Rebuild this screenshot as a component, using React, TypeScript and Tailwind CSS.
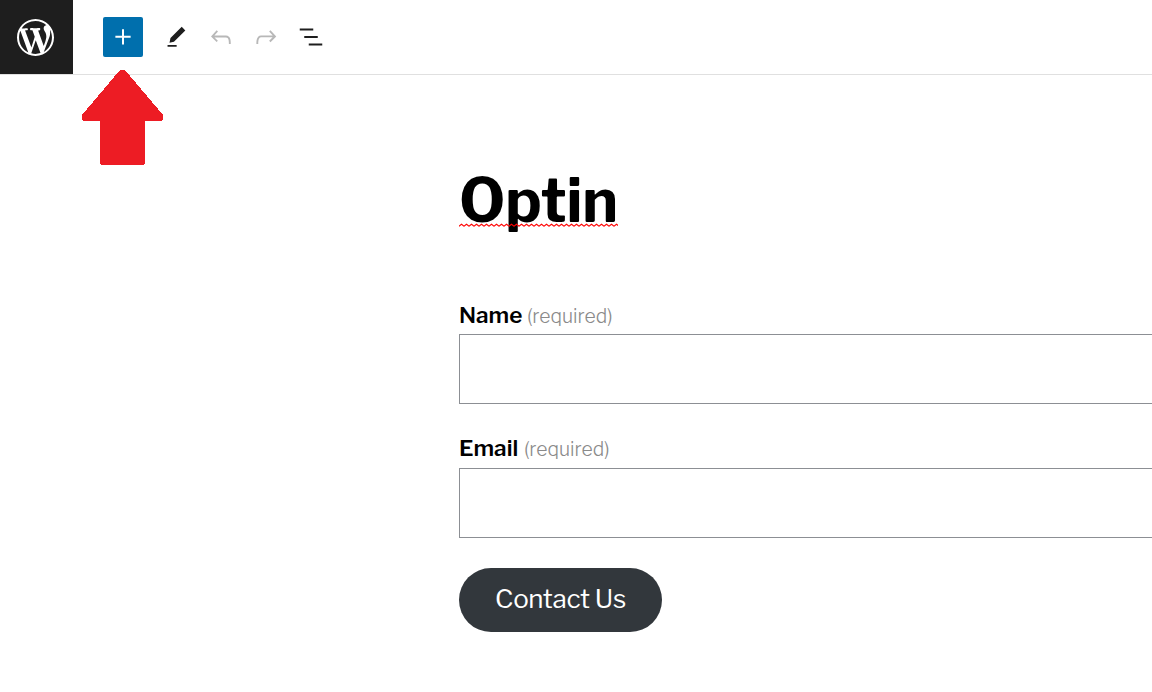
const FONT =
  "font-['Libre_Franklin','Inter','Liberation_Sans',sans-serif]";

const ICONS = {
  wordpress:
    "M20 10c0-5.51-4.49-10-10-10C4.48 0 0 4.49 0 10c0 5.52 4.48 10 10 10 5.51 0 10-4.48 10-10zM7.78 15.37L4.37 6.22c.55-.02 1.17-.08 1.17-.08.5-.06.44-1.13-.06-1.11 0 0-1.45.11-2.37.11-.18 0-.37 0-.58-.01C4.12 2.69 6.87 1.11 10 1.11c2.33 0 4.45.87 6.05 2.34-.68-.11-1.65.39-1.65 1.58 0 .74.45 1.36.9 2.1.35.61.55 1.36.55 2.46 0 1.49-1.4 5-1.4 5l-3.03-8.37c.54-.02.82-.17.82-.17.5-.05.44-1.25-.06-1.22 0 0-1.44.12-2.38.12-.87 0-2.33-.12-2.33-.12-.5-.03-.56 1.2-.06 1.22l.92.08 1.26 3.41zM17.41 10c.24-.64.74-1.87.43-4.25.7 1.29 1.05 2.71 1.05 4.25 0 3.29-1.73 6.24-4.4 7.78.97-2.59 1.94-5.2 2.92-7.78zM6.1 18.09C3.12 16.65 1.11 13.53 1.11 10c0-1.3.23-2.48.72-3.59C3.25 10.3 4.67 14.2 6.1 18.09zm4.03-6.63l2.58 6.98c-.86.29-1.76.45-2.71.45-.79 0-1.57-.11-2.29-.33.81-2.38 1.62-4.74 2.42-7.1z",
  plus: "M18.1 11h-5.3V5.7h-1.6V11H5.9v1.6h5.3v5.3h1.6v-5.3h5.3z",
  edit: "M17.3 2.6L20.6 5.9 10.1 16.4 6 17.4 6.9 13z M4.2 19.4h8.4v1.5H4.2z",
  undo: "M18.3 11.7c-.6-.6-1.4-.9-2.3-.9H6.7l2.9-3.3-1.1-1-4.5 5L8.5 16l1-1-2.7-2.7H16c.5 0 .9.2 1.3.5 1 1 1 3.4 1 4.5v.3h1.5v-.2c0-1.5 0-4.3-1.5-5.7z",
  redo: "M15.6 6.5l-1.1 1 2.9 3.3H8c-.9 0-1.7.3-2.3.9-1.4 1.5-1.4 4.2-1.4 5.6v.2h1.5v-.3c0-1.1 0-3.5 1-4.5.3-.3.7-.5 1.3-.5h9.2L14.5 15l1.1 1.1 4.6-4.6-4.6-5z",
  list: "M13.8 5.2H3v1.5h10.8V5.2zm-3.6 12v1.5H21v-1.5H10.2zm7.2-6H6.6v1.5h10.8v-1.5z",
};

const tools = [
  { label: "Edit", path: ICONS.edit, size: 26, color: "text-[#1e1e1e]" },
  { label: "Undo", path: ICONS.undo, size: 30, color: "text-[#b8b8b8]" },
  { label: "Redo", path: ICONS.redo, size: 30, color: "text-[#b8b8b8]" },
  { label: "List view", path: ICONS.list, size: 30, color: "text-[#1e1e1e]" },
];

const fields = [
  { label: "Name", width: "w-[63px]", height: "h-[133px]" },
  { label: "Email", width: "w-[60px]", height: "h-[136px]" },
];

const Icon = ({ path, size }: { path: string; size: number }) => (
  <svg width={size} height={size} viewBox="0 0 24 24" fill="currentColor">
    <path d={path} />
  </svg>
);

const Toolbar = () => {
  return (
    <header className="flex h-[75px] border-b border-[#e0e0e0]">
      <button
        aria-label="WordPress"
        className="flex w-[73px] h-[74px] items-center justify-center bg-[#1e1e1e] text-white pr-[2px]"
      >
        <svg width="37" height="37" viewBox="0 0 20 20" fill="currentColor">
          <path d={ICONS.wordpress} />
        </svg>
      </button>
      <div className="relative flex items-center pl-[30px]">
        <button
          aria-label="Add block"
          className="flex size-10 items-center justify-center rounded-[2px] bg-[#006fad] text-white"
        >
          <Icon path={ICONS.plus} size={30} />
        </button>
        <div className="flex pl-[10px]">
          {tools.map((item) => (
            <button
              key={item.label}
              aria-label={item.label}
              className={`flex w-[45px] h-10 items-center justify-center ${item.color}`}
            >
              <Icon path={item.path} size={item.size} />
            </button>
          ))}
        </div>
        {/* arrow pointing at the add block button */}
        <svg
          className="absolute left-[9px] top-[70px] z-10"
          width="81"
          height="95"
          viewBox="0 0 81 95"
          fill="#ed1c24"
          shapeRendering="crispEdges"
        >
          <path d="M38 0H43L81 45V49L80 51H63V93L62 95H19L18 93V51H1L0 49V45z" />
        </svg>
      </div>
    </header>
  );
};

const App = () => {
  return (
    <div className={`h-[692px] overflow-hidden bg-white text-black ${FONT}`}>
      <Toolbar />
      <main className="pl-[459px] pt-[90px]">
        <h1 className="flex h-[71px] w-[159px] items-center text-[60px] leading-[71px] font-bold tracking-[-0.1px] whitespace-nowrap">
          <span className="relative">
            Optin
            <svg
              className="absolute left-0 top-[58px]"
              width="159"
              height="4"
              viewBox="0 0 159 4"
            >
              <defs>
                <pattern id="wave" width="5" height="4" patternUnits="userSpaceOnUse">
                  <path d="M-1 3.1L0 3.1L2.5 1.3L5 3.1L6 3.1" fill="none" stroke="#f00" strokeWidth="1.1" />
                </pattern>
              </defs>
              <rect width="159" height="4" fill="url(#wave)" />
            </svg>
          </span>
        </h1>
        <form className="pt-[63px]">
          {fields.map((item) => (
            <div key={item.label} className={item.height}>
              <label
                className={`flex items-baseline gap-[5px] leading-8 whitespace-nowrap ${item.label === "Name" ? "h-[35px]" : "h-9"}`}
              >
                <span className={`${item.width} text-[22.5px] font-semibold`}>
                  {item.label}
                </span>
                <span className="text-[19.3px] font-light text-[#8a8a8a]">(required)</span>
              </label>
              <input
                aria-label={item.label}
                className="block h-[70px] w-[760px] border border-[#8c8f94] bg-white"
              />
            </div>
          ))}
          <button
            type="button"
            className="flex h-16 w-[203px] items-center justify-center rounded-full bg-[#32373c] pb-[3px] text-[26px] tracking-[-0.35px] text-white whitespace-nowrap"
          >
            Contact Us
          </button>
        </form>
      </main>
    </div>
  );
};

export default App;
